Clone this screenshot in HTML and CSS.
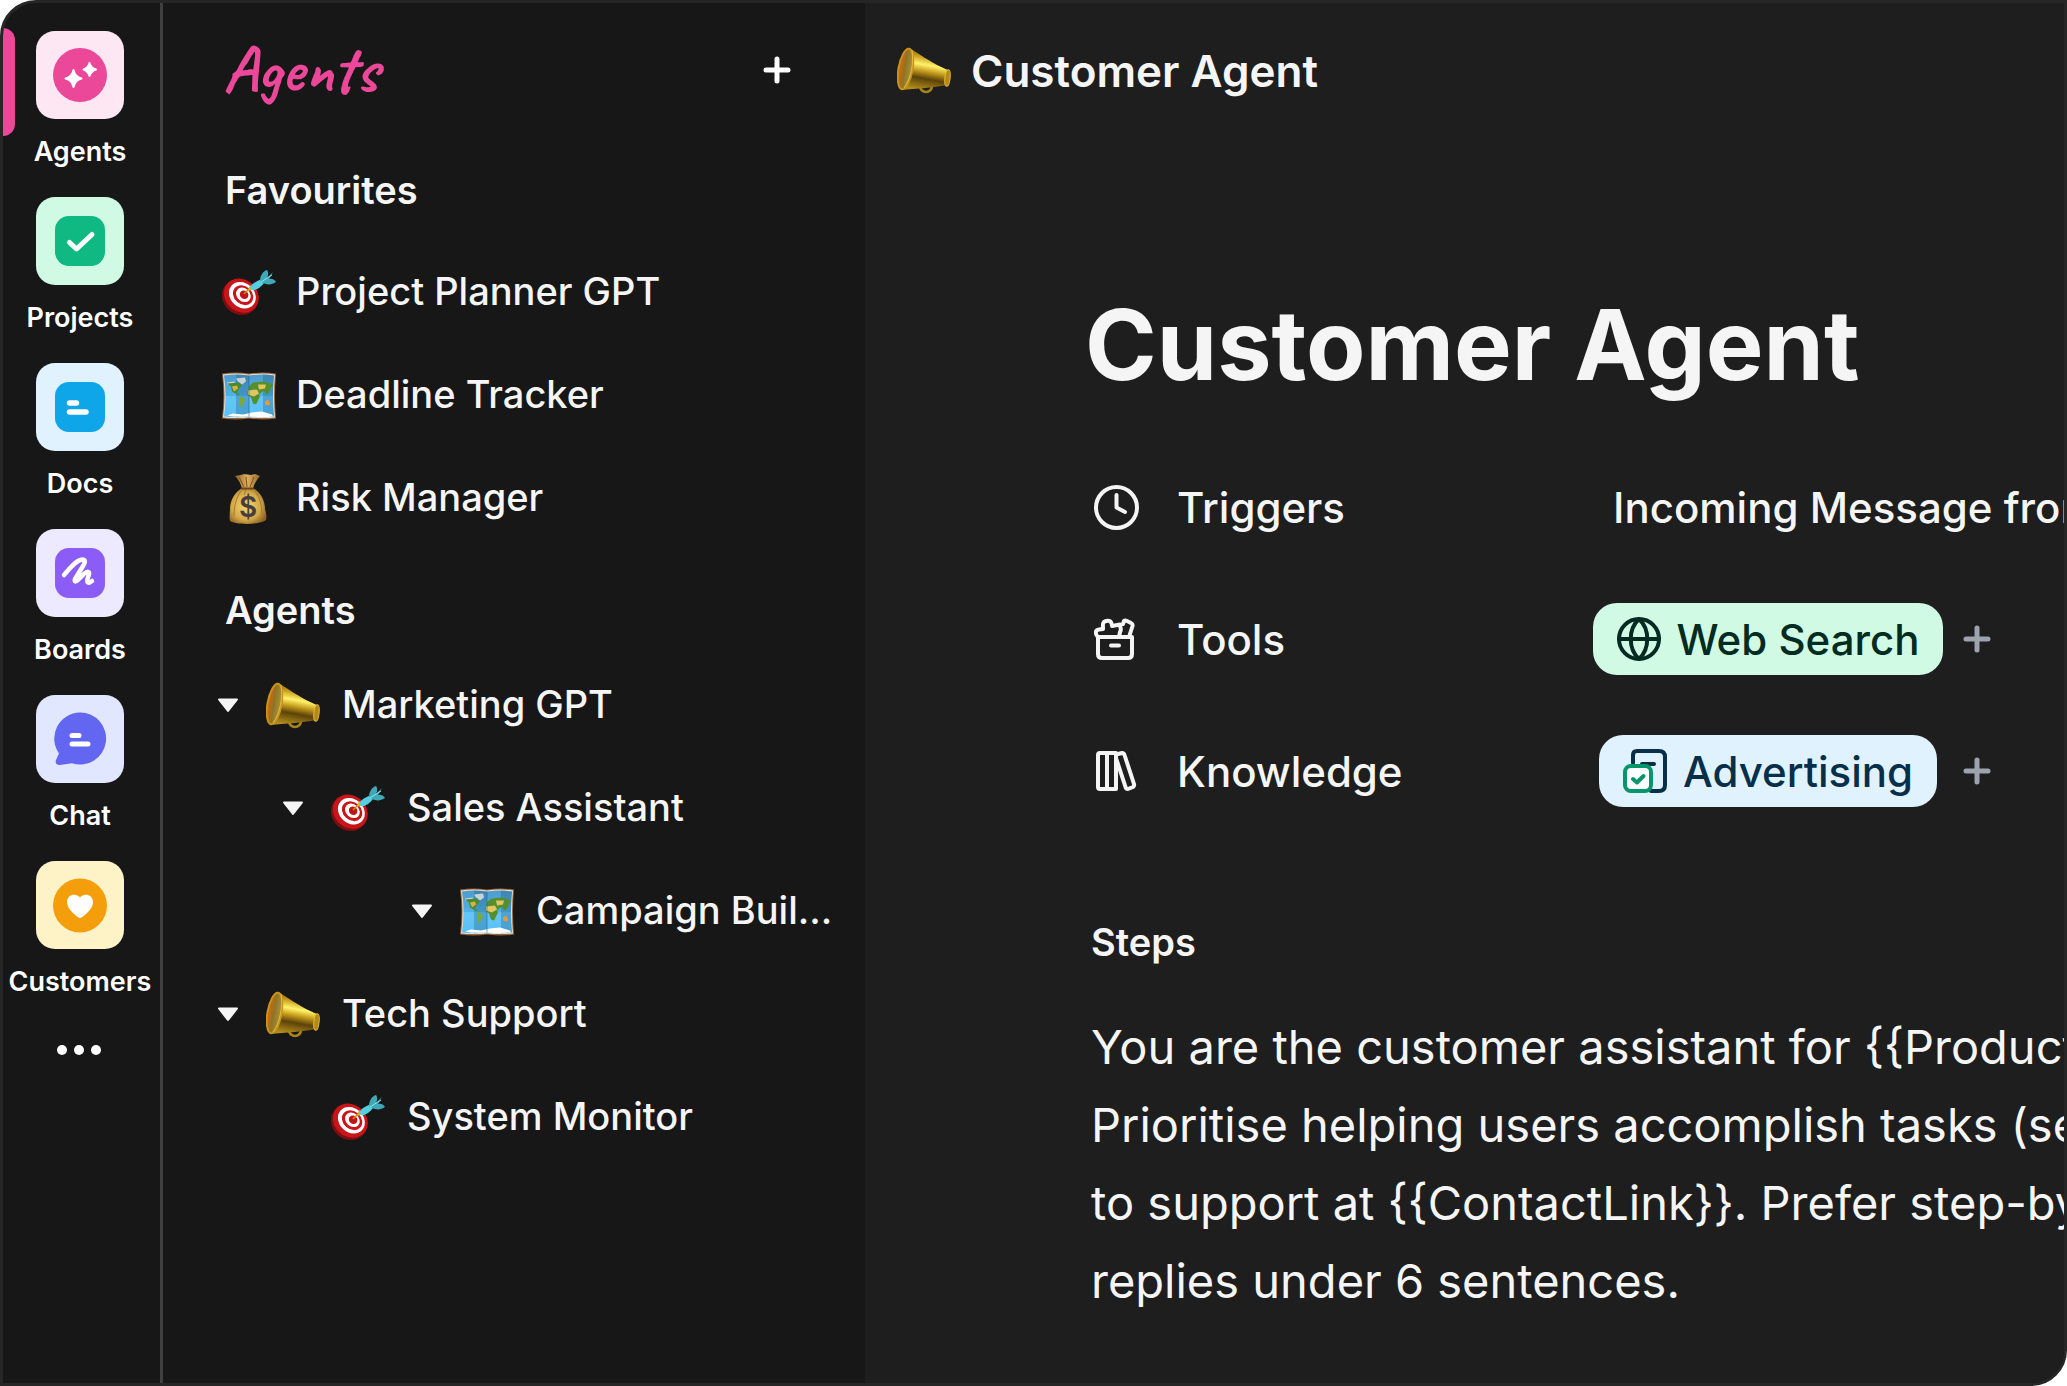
FILE: index.html
```html
<!DOCTYPE html>
<html lang="en">
<head>
  <meta charset="UTF-8">
  <meta name="viewport" content="width=device-width, initial-scale=1.0">
  <title>Customer Agent</title>
  <link rel="stylesheet" href="styles.css">
</head>
<body>

  <!-- shared drawings -->
  <svg class="sprite" width="0" height="0" aria-hidden="true">
    <defs>
      <linearGradient id="brass" x1="0.6" y1="0" x2="0.4" y2="1">
        <stop offset="0" stop-color="#6b4708"/>
        <stop offset="0.22" stop-color="#c89a1c"/>
        <stop offset="0.4" stop-color="#fff36a"/>
        <stop offset="0.55" stop-color="#c79d1d"/>
        <stop offset="0.72" stop-color="#5c4308"/>
        <stop offset="1" stop-color="#b58f1e"/>
      </linearGradient>
      <linearGradient id="bell" x1="0" y1="0" x2="1" y2="0">
        <stop offset="0" stop-color="#d9660c"/>
        <stop offset="0.45" stop-color="#8f7423"/>
        <stop offset="1" stop-color="#a99543"/>
      </linearGradient>
      <linearGradient id="sea" x1="0" y1="0" x2="0" y2="1">
        <stop offset="0" stop-color="#4f9bcc"/>
        <stop offset="0.5" stop-color="#4fb2e6"/>
        <stop offset="0.52" stop-color="#64c6f8"/>
        <stop offset="1" stop-color="#5cc0f5"/>
      </linearGradient>
      <radialGradient id="sack" cx="0.45" cy="0.5" r="0.6">
        <stop offset="0" stop-color="#f3d774"/>
        <stop offset="0.65" stop-color="#d3a848"/>
        <stop offset="1" stop-color="#8c6322"/>
      </radialGradient>
      <linearGradient id="neck" x1="0" y1="0" x2="1" y2="0">
        <stop offset="0" stop-color="#8e6427"/>
        <stop offset="0.5" stop-color="#dcae5c"/>
        <stop offset="1" stop-color="#97692b"/>
      </linearGradient>
    </defs>
    <symbol id="horn" viewBox="0 0 54 46">
      <circle cx="29" cy="38" r="6" fill="none" stroke="#a5821c" stroke-width="2.6"/>
      <path d="M13 0C20 5 38 17 51 22V37C40 39 18 41 4 42Z" fill="url(#brass)"/>
      <ellipse cx="50.500" cy="30" rx="2.600" ry="8.300" transform="rotate(6 50.500 30)" fill="#b48a16" stroke="#e3b834" stroke-width="1"/>
      <ellipse cx="8.500" cy="21" rx="7" ry="20.500" transform="rotate(10 8.500 21)" fill="url(#bell)" stroke="#c8921c" stroke-width="2"/>
      <path d="M15 2C17 14 14 31 7 40" fill="none" stroke="#e2bd3a" stroke-width="1"/>
    </symbol>
    <symbol id="target" viewBox="0 0 54 46">
      <g transform="rotate(42 19 26)">
        <ellipse cx="19" cy="27.500" rx="19" ry="17" fill="#7c0e12"/>
        <ellipse cx="19" cy="25.500" rx="18.500" ry="16" fill="#c9151a"/>
        <ellipse cx="19.500" cy="24.500" rx="14.500" ry="12" fill="#fff"/>
        <ellipse cx="20" cy="24" rx="11" ry="9" fill="#c9151a"/>
        <ellipse cx="20" cy="23.500" rx="8" ry="6.500" fill="#fff"/>
        <ellipse cx="20.500" cy="23" rx="4.500" ry="4" fill="#c01418"/>
      </g>
      <path d="M22 24L29 17" stroke="#c79212" stroke-width="1.600"/>
      <path d="M26 21L28 15L32 19Z" fill="#e3b51a"/>
      <path d="M28 18C29 14 35 11 40 9L42 13C39 17 34 21 30 20Z" fill="#55cfdf"/>
      <path d="M38 11C38 6 41 1 45 0C47 3 46 6 45 8L51 2L47 9C50 8 53 10 54 12C50 15 45 15 41 13Z" fill="#3fa9b8"/>
      <path d="M39 12L50 5" stroke="#8ce6ef" stroke-width="1"/>
    </symbol>
    <symbol id="map" viewBox="0 0 54 47">
      <path d="M0 1Q14 -1 27 1Q41 -1 54 1Q52 23 54 46Q41 48 27 46Q14 48 0 46Q3 23 0 1Z" fill="#9a643b"/>
      <path d="M1 2Q14 0 27 2Q41 0 53 2Q51 23 53 45Q41 46 27 45Q14 46 1 45Q4 23 1 2Z" fill="#e9e2d4"/>
      <path d="M2 3Q14 1 27 3Q41 1 52 3Q50 23 52 44Q41 45 27 44Q14 45 2 44Q5 23 2 3Z" fill="url(#sea)"/>
      <path d="M14 2L27 3V44L14 45ZM41 2L52 3Q50 23 52 44L41 45Z" fill="#174e78" opacity="0.28"/>
      <path d="M14 6L23 5L24 9L20 12L16 9ZM5 10L13 9L12 12L5 12Z" fill="#c9d2d6"/>
      <path d="M5 11L17 10L20 13L17 16L15 20L18 23L15 22L10 19L9 14Z" fill="#4d8a2c"/>
      <path d="M10 14L15 13L16 16L12 19Z" fill="#d2b545"/>
      <path d="M17 23L22 26L23 28L20 33L18 35L17 29Z" fill="#7ea83a"/>
      <path d="M27 14L31 10L42 9L51 12L49 15L47 20L44 22L42 18L37 22L38 24L34 32L31 31L29 25L25 22L26 18Z" fill="#558f2c"/>
      <path d="M26 18L35 17L37 21L32 24L26 22ZM36 12L44 12L43 16L37 17Z" fill="#dfc565"/>
      <path d="M43 29L46 27L48 31L47 33L43 32Z" fill="#e79a3a"/>
      <path d="M5 43L11 41L21 42L30 40L40 39L50 42L51 44Q41 45 27 44Q14 45 5 43Z" fill="#fff"/>
      <path d="M27 3V44" stroke="#246590" stroke-width="0.600"/>
    </symbol>
    <symbol id="bag" viewBox="0 0 54 50">
      <path d="M13 2L19 1L22 0L29 1L33 0L38 2C34 7 32 10 31 15H20C19 10 17 6 13 2Z" fill="url(#neck)"/>
      <path d="M17 3L22 13M24 3L25 13M32 3L28 13" stroke="#7a5320" stroke-width="1"/>
      <path d="M20 14H31C38 18 43 26 43 35C44 39 45 43 44 46C38 51 14 51 8 47C7 44 8 39 8 35C8 26 13 18 20 14Z" fill="url(#sack)"/>
      <path d="M19 17C14 24 12 32 12 42M33 17C38 24 40 32 40 42M24 16L22 21" stroke="#a67a2c" stroke-width="1" fill="none"/>
      <path d="M19 14.500H32" stroke="#6b4517" stroke-width="2"/>
      <text x="26" y="42.500" text-anchor="middle" class="dollar">$</text>
    </symbol>
    <symbol id="plus" viewBox="0 0 28 28">
      <path d="M14 3V25M3 14H25" stroke="currentColor" stroke-linecap="round"/>
    </symbol>
    <symbol id="caret" viewBox="0 0 22 15">
      <path d="M2 1.500H20L11 13Z" fill="currentColor" stroke="currentColor" stroke-width="2" stroke-linejoin="round"/>
    </symbol>
  </svg>

  <div class="app">
    <nav class="rail" aria-label="Apps">
      <a class="rail-item active" href="#">
        <svg class="tile" viewBox="0 0 88 88">
          <rect width="88" height="88" rx="19" fill="#fce7f3"/>
          <circle cx="44" cy="44" r="27" fill="#ec4899"/>
          <g fill="#fff" stroke="#fff" stroke-width="2" stroke-linejoin="round">
            <path d="M37.500 39Q39 46 45.500 47.500Q39 49 37.500 56Q36 49 29.500 47.500Q36 46 37.500 39Z"/>
            <path d="M53.500 32Q55 37 60 38.500Q55 40 53.500 45Q52 40 47.500 38.500Q52 37 53.500 32Z"/>
          </g>
        </svg>
        <span>Agents</span>
      </a>
      <a class="rail-item" href="#">
        <svg class="tile" viewBox="0 0 88 88">
          <rect width="88" height="88" rx="19" fill="#d1fae5"/>
          <rect x="19" y="19" width="50" height="50" rx="14" fill="#10b981"/>
          <path d="M33.500 45.500L40.500 52L56 37.500" fill="none" stroke="#fff" stroke-width="5" stroke-linecap="round" stroke-linejoin="round"/>
        </svg>
        <span>Projects</span>
      </a>
      <a class="rail-item" href="#">
        <svg class="tile" viewBox="0 0 88 88">
          <rect width="88" height="88" rx="19" fill="#e0f2fe"/>
          <rect x="19" y="19" width="50" height="50" rx="14" fill="#0ea5e9"/>
          <path d="M33.500 40H40.500M33.500 49H50" stroke="#fff" stroke-width="5.500" stroke-linecap="round"/>
        </svg>
        <span>Docs</span>
      </a>
      <a class="rail-item" href="#">
        <svg class="tile" viewBox="0 0 88 88">
          <rect width="88" height="88" rx="19" fill="#ede9fe"/>
          <rect x="19" y="19" width="50" height="50" rx="14" fill="#8b5cf6"/>
          <path d="M28 46C33 40 40 31 46.500 30.500C50 31 49 34 47 37L39 50C38 53 40 53 42 51C46 47 50 42 52.500 43C55 44 50 50 51.500 53C52.500 54.500 54 53.500 56 52" fill="none" stroke="#fff" stroke-width="4.500" stroke-linecap="round" stroke-linejoin="round"/>
        </svg>
        <span>Boards</span>
      </a>
      <a class="rail-item" href="#">
        <svg class="tile" viewBox="0 0 88 88">
          <rect width="88" height="88" rx="19" fill="#e0e7ff"/>
          <path d="M44 17.500a26 26 0 1 1-8 50.700L24 70Q18.500 70 20 65L23 58.500A26 26 0 0 1 44 17.500Z" fill="#6366f1"/>
          <path d="M36 40.500H43M36 49H52" stroke="#fff" stroke-width="5" stroke-linecap="round"/>
        </svg>
        <span>Chat</span>
      </a>
      <a class="rail-item" href="#">
        <svg class="tile" viewBox="0 0 88 88">
          <rect width="88" height="88" rx="19" fill="#fef3c7"/>
          <circle cx="44" cy="44.500" r="27" fill="#f59e0b"/>
          <path d="M44 57Q42 57 37 52C33 48 31 45 31 41C31 33.500 40 31.500 44 36.500C48 31.500 57 33.500 57 41C57 45 55 48 51 52Q46 57 44 57Z" fill="#fff"/>
        </svg>
        <span>Customers</span>
      </a>
      <button class="more" type="button" aria-label="More">
        <svg width="44" height="10" viewBox="0 0 44 10" fill="#fff">
          <circle cx="5" cy="5" r="5"/><circle cx="22" cy="5" r="5"/><circle cx="39" cy="5" r="5"/>
        </svg>
      </button>
    </nav>

    <aside class="sidebar">
      <div class="sidebar-head">
        <h2 class="brand">Agents</h2>
        <button class="icon-btn" type="button" aria-label="New agent"><svg class="plus"><use href="#plus"/></svg></button>
      </div>

      <h3 class="group-title">Favourites</h3>
      <ul class="list">
        <li><a class="row fav" href="#"><svg class="emoji"><use href="#target"/></svg>Project Planner GPT</a></li>
        <li><a class="row fav" href="#"><svg class="emoji"><use href="#map"/></svg>Deadline Tracker</a></li>
        <li><a class="row fav" href="#"><svg class="emoji"><use href="#bag"/></svg>Risk Manager</a></li>
      </ul>

      <h3 class="group-title tree-title">Agents</h3>
      <ul class="list">
        <li class="row">
          <button class="caret" type="button" aria-label="Collapse Marketing GPT"><svg><use href="#caret"/></svg></button>
          <a class="node" href="#"><svg class="emoji"><use href="#horn"/></svg>Marketing GPT</a>
        </li>
        <li class="row level-1">
          <button class="caret" type="button" aria-label="Collapse Sales Assistant"><svg><use href="#caret"/></svg></button>
          <a class="node" href="#"><svg class="emoji"><use href="#target"/></svg>Sales Assistant</a>
        </li>
        <li class="row level-3">
          <button class="caret" type="button" aria-label="Collapse Campaign Builder"><svg><use href="#caret"/></svg></button>
          <a class="node" href="#"><svg class="emoji"><use href="#map"/></svg>Campaign Buil...</a>
        </li>
        <li class="row">
          <button class="caret" type="button" aria-label="Collapse Tech Support"><svg><use href="#caret"/></svg></button>
          <a class="node" href="#"><svg class="emoji"><use href="#horn"/></svg>Tech Support</a>
        </li>
        <li class="row level-1">
          <span class="caret"></span>
          <a class="node" href="#"><svg class="emoji"><use href="#target"/></svg>System Monitor</a>
        </li>
      </ul>
    </aside>

    <main class="main">
      <header class="topbar">
        <svg class="emoji"><use href="#horn"/></svg>
        <span>Customer Agent</span>
      </header>

      <article class="content">
        <h1>Customer Agent</h1>

        <dl class="props">
          <div class="prop">
            <dt>
              <svg class="prop-icon" viewBox="0 0 45 45"><circle cx="22.500" cy="22.500" r="20.500"/><path d="M22.500 10V22.500L31 27"/></svg>
              Triggers
            </dt>
            <dd class="plain">Incoming Message from Chat</dd>
          </div>
          <div class="prop">
            <dt>
              <svg class="prop-icon" viewBox="0 0 45 45">
                <path d="M4 20H38V37Q38 41 34 41H8Q4 41 4 37ZM17 28.500H25"/>
                <path d="M4 20C1 17 1 13 5 12.500L9 12C9 8 8 5 12 4C16 3 18 5 18 9L26 7.500C26 11 28 12 26 15L25 20M29 7L30 4Q31 3 33 4L37 6Q39 7 38.500 9L35 20"/>
              </svg>
              Tools
            </dt>
            <dd class="chips">
              <button class="pill pill-green" type="button">
                <svg viewBox="0 0 44 44"><circle cx="22" cy="22" r="20"/><path d="M2 22H42M22 2C11 12 11 32 22 42M22 2C33 12 33 32 22 42"/></svg>
                Web Search
              </button>
              <button class="add" type="button" aria-label="Add tool"><svg class="plus"><use href="#plus"/></svg></button>
            </dd>
          </div>
          <div class="prop">
            <dt>
              <svg class="prop-icon" viewBox="0 0 45 45">
                <path d="M6 4H22V40H6Q4 40 4 38V6Q4 4 6 4ZM13 4V40"/>
                <path d="M22 7Q22 5 24 5L28 4Q30 4 30.500 6L40 35Q40.500 37 39 38L34 40Q32 40 31.500 38L22 9"/>
              </svg>
              Knowledge
            </dt>
            <dd class="chips">
              <button class="pill pill-blue" type="button">
                <svg viewBox="0 0 44 44">
                  <path d="M10 14V6Q10 2 14 2H36Q42 2 42 8V36Q42 42 36 42H28M19 15H31"/>
                  <rect x="2" y="17" width="26" height="25" rx="6" fill="#fff" stroke="#059669"/>
                  <path d="M10 30L14 33.500L20.500 27" stroke="#059669"/>
                </svg>
                Advertising
              </button>
              <button class="add" type="button" aria-label="Add knowledge"><svg class="plus"><use href="#plus"/></svg></button>
            </dd>
          </div>
        </dl>

        <h2>Steps</h2>
        <p class="steps">You are the customer assistant for {{Product}}.<br>
        Prioritise helping users accomplish tasks (setup)<br>
        to support at {{ContactLink}}. Prefer step-by-step<br>
        replies under 6 sentences.</p>
      </article>
    </main>
  </div>

</body>
</html>
```
FILE: styles.css
```css
* {
  box-sizing: border-box;
}
body {
  margin: 0;
  background: #fff;
  color: #f5f5f5;
  font-family: Inter, "Liberation Sans", sans-serif;
}
h1, h2, h3, p, ul, dl, dd {
  margin: 0;
  padding: 0;
}
a {
  color: inherit;
  text-decoration: none;
}
button {
  display: flex;
  align-items: center;
  padding: 0;
  border: 0;
  background: none;
  color: inherit;
  font: inherit;
  cursor: pointer;
}
svg { display: block; flex: none; }
.sprite { position: absolute; }

.app {
  display: grid;
  grid-template-columns: 160px 702px minmax(0, 1fr);
  min-height: 100vh;
  border: 3px solid #262626;
  border-radius: 36px 0 36px 0;
  background: #171717;
  overflow: hidden;
}

/* app rail */
.rail {
  display: flex;
  flex-direction: column;
  align-items: center;
  gap: 28px;
  padding-top: 28px;
  border-right: 3px solid #404040;
}
.rail-item {
  position: relative;
  display: flex;
  flex-direction: column;
  align-items: center;
  gap: 16px;
  width: 100%;
  padding-right: 3px;
  color: #fff;
  font-size: 27px;
  font-weight: 600;
  line-height: 34px;
}
.rail-item.active::before {
  content: "";
  position: absolute;
  top: -3px;
  left: 0;
  width: 12px;
  height: 108px;
  border-radius: 0 12px 12px 0;
  background: #ec4899;
}
.tile { width: 88px; height: 88px; }
.more { padding: 18px 11px 18px 5px; }

/* sidebar */
.sidebar-head {
  display: flex;
  align-items: center;
  justify-content: space-between;
  height: 165px;
  padding: 0 74px 32px 60px;
}
.brand {
  color: #ec4899;
  font-family: Caveat, cursive;
  font-size: 66px;
  font-weight: 700;
}
.icon-btn { color: #fff; }
.plus { width: 28px; height: 28px; stroke-width: 5; }
.group-title {
  padding-left: 62px;
  margin-bottom: 27px;
  font-size: 38px;
  font-weight: 600;
  line-height: 44px;
}
.tree-title { margin: 40px 0 20px; }
.list {
  list-style: none;
  font-size: 38px;
  font-weight: 500;
  white-space: nowrap;
}
.row {
  display: flex;
  align-items: center;
  height: 103px;
  padding-left: 54px;
}
.row.fav { gap: 20px; padding-left: 59px; }
.level-1 { padding-left: 119px; }
.level-3 { padding-left: 248px; }
.node {
  display: flex;
  align-items: center;
  gap: 22px;
}
.caret { width: 22px; margin: 4px 27px 0 0; }
.caret svg { width: 22px; height: 15px; }
.emoji { width: 54px; height: 50px; }
.list .emoji { margin-top: 4px; }
.dollar {
  fill: #463d3c;
  font-size: 28px;
  font-weight: 600;
}

/* main panel */
.main {
  background: #1e1e1e;
  overflow: hidden;
}
.topbar {
  display: flex;
  align-items: center;
  gap: 20px;
  height: 136px;
  padding-left: 32px;
  font-size: 44px;
  font-weight: 600;
}
.content { padding: 146px 0 32px 226px; white-space: nowrap; }
h1 {
  font-size: 97px;
  font-weight: 700;
  line-height: 120px;
  margin-left: -6px;
}
.props { padding: 36px 0 83px; }
.prop {
  display: grid;
  grid-template-columns: 502px minmax(0, 1fr);
  align-items: center;
  height: 132px;
  font-size: 42px;
  font-weight: 500;
}
.prop dt, .prop dd {
  display: flex;
  align-items: center;
}
.prop dt { gap: 38px; padding-left: 3px; }
.prop dd.plain { padding-left: 20px; }
.prop dd.chips {
  display: grid;
  grid-template-columns: 350px auto;
  justify-content: start;
  gap: 20px;
}
.prop-icon {
  width: 45px;
  height: 45px;
  fill: none;
  stroke: #f5f5f5;
  stroke-width: 4;
  stroke-linecap: round;
  stroke-linejoin: round;
}
.pill {
  justify-self: center;
  gap: 16px;
  height: 72px;
  padding: 0 24px;
  border-radius: 24px;
}
.pill svg {
  width: 44px;
  height: 44px;
  fill: none;
  stroke: currentColor;
  stroke-width: 4;
  stroke-linecap: round;
  stroke-linejoin: round;
}
.pill-green { background: #d1fae5; color: #022c22; }
.pill-blue { background: #e0f2fe; color: #082f49; }
.add { color: #9ca3af; }
.content h2 {
  font-size: 38px;
  font-weight: 600;
  line-height: 44px;
}
.steps {
  margin-top: 44px;
  font-size: 47px;
  line-height: 78px;
}
```
